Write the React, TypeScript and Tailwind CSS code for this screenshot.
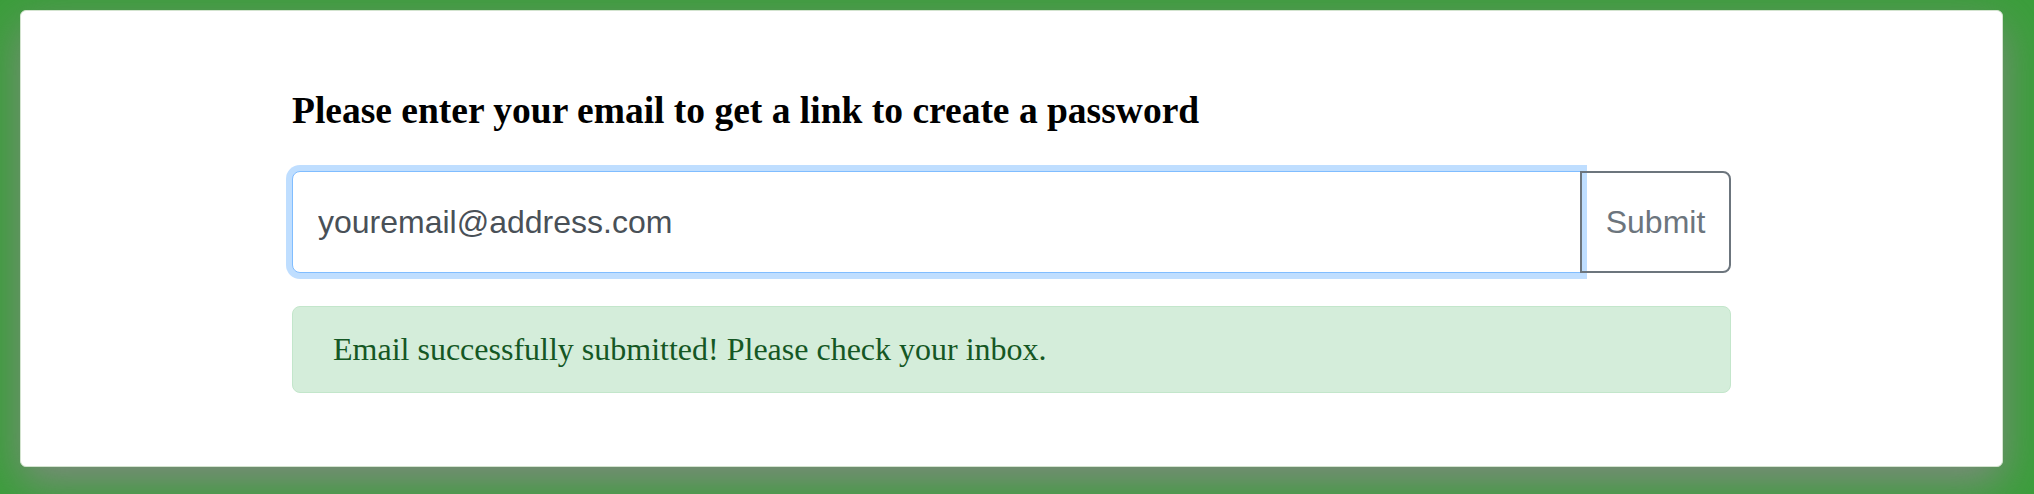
import React from "react";

export default function App() {
  return (
    <div className="h-[494px] w-[2034px] bg-[#3b9e3b] pl-[20px] pr-[31px] pt-[10px] pb-[27px] overflow-hidden">
      <div className="flex h-full justify-center rounded-[6px] border border-[#d3e4cf] bg-white shadow-[0_16px_44px_rgba(135,135,135,0.9)]">
        <div className="w-[1439px] pt-[78px]">
          <h4
            className="text-[37.5px] leading-[44px] font-bold text-black"
            style={{ fontFamily: '"Liberation Serif", "Times New Roman", serif' }}
          >
            Please enter your email to get a link to create a password
          </h4>
          <div className="mt-[38px] flex h-[102px]">
            <input
              readOnly
              value="youremail@address.com"
              className="relative z-10 h-full flex-1 rounded-l-[8px] border border-[#80bdff] bg-white pl-[25px] text-[32px] text-[#495057] shadow-[0_0_0_6px_rgba(0,123,255,0.25)] outline-none"
              style={{ fontFamily: '"Liberation Sans", Arial, sans-serif' }}
            />
            <button
              className="relative z-20 -ml-px h-full w-[151px] rounded-r-[8px] border-2 border-[#6c757d] bg-transparent text-[32px] text-[#6c757d]"
              style={{ fontFamily: '"Liberation Sans", Arial, sans-serif' }}
            >
              Submit
            </button>
          </div>
          <div
            className="mt-[33px] rounded-[8px] border border-[#c3e6cb] bg-[#d4edda] px-[40px] py-[24px] text-[32px] leading-[37px] text-[#155724]"
            style={{ fontFamily: '"Liberation Serif", "Times New Roman", serif' }}
          >
            Email successfully submitted! Please check your inbox.
          </div>
        </div>
      </div>
    </div>
  );
}
